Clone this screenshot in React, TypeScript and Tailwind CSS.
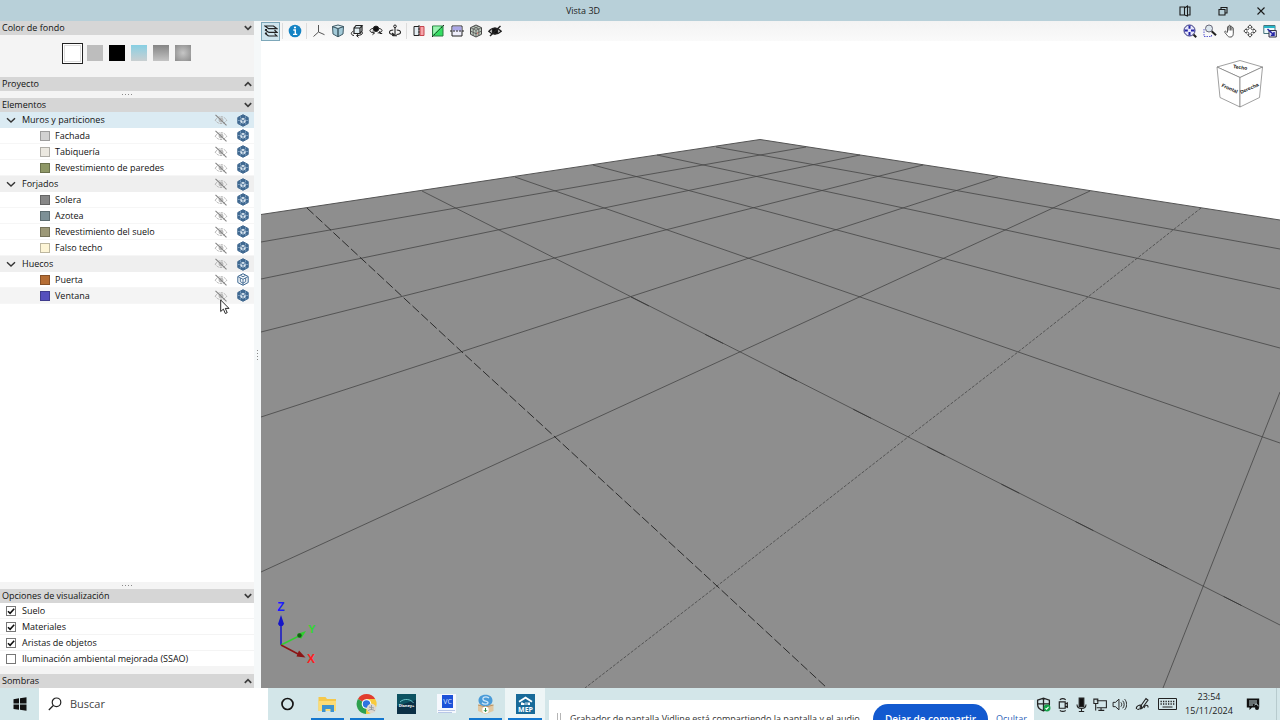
import * as React from "react";
import clsx from "clsx";

type Item = { name: string; color: string; wire?: boolean; hover?: boolean };
type Group = { name: string; active?: boolean; items: Item[] };

const groups: Group[] = [
  {
    name: "Muros y particiones",
    active: true,
    items: [
      { name: "Fachada", color: "bg-[#d2d2d2]" },
      { name: "Tabiquería", color: "bg-[#ebe8e0]" },
      { name: "Revestimiento de paredes", color: "bg-[#8f9867]" },
    ],
  },
  {
    name: "Forjados",
    items: [
      { name: "Solera", color: "bg-[#878787]" },
      { name: "Azotea", color: "bg-[#7d9096]" },
      { name: "Revestimiento del suelo", color: "bg-[#9c9877]" },
      { name: "Falso techo", color: "bg-[#fdf5d6]" },
    ],
  },
  {
    name: "Huecos",
    items: [
      { name: "Puerta", color: "bg-[#b56d34]", wire: true },
      { name: "Ventana", color: "bg-[#554fbd]", hover: true },
    ],
  },
];

const backgrounds = [
  { name: "Gris", style: "bg-[#bdbdbd]" },
  { name: "Negro", style: "bg-black" },
  { name: "Cielo", style: "bg-linear-to-b from-[#86cfe3] to-[#c9cfd1]" },
  { name: "Degradado", style: "bg-linear-to-b from-[#858585] to-[#c4c4c4]" },
  { name: "Radial", style: "bg-radial from-[#c6c6c6] to-[#8b8b8b]" },
];

// floor grid, [x1, y1, x2, y2]
const gridLines = [
  [806, 147, 261, 242],
  [860, 155, 261, 279],
  [923, 165, 261, 332],
  [998, 177, 261, 417],
  [1090, 191, 261, 572],
  [1280, 392, 1163, 688],
  [716, 147, 1280, 249],
  [657, 155, 1280, 289],
  [593, 165, 1280, 348],
  [515, 177, 1280, 443],
  [422, 191, 1280, 625],
];

function Chevron({ up = false }: { up?: boolean }) {
  return (
    <svg width="10" height="8" viewBox="0 0 10 8" fill="none" stroke="#3c3c3c" strokeWidth="1.7">
      <path d={up ? "M1.8 5.8 5 2.7l3.200 3.100" : "M1.8 2.2 5 5.300l3.200-3.100"} />
    </svg>
  );
}

function PanelHeader({ title, up }: { title: string; up?: boolean }) {
  return (
    <button
      type="button"
      className="flex h-[14px] w-full shrink-0 items-center justify-between bg-[#d6d6d6] pr-px pl-[2px] text-left"
    >
      <span>{title}</span>
      <Chevron up={up} />
    </button>
  );
}

function Splitter() {
  return (
    <div className="flex h-[7px] shrink-0 items-center justify-center gap-[2px] bg-[#f4f4f4]">
      {[0, 1, 2, 3].map((i) => (
        <i key={i} className="size-px bg-[#8a8a8a]" />
      ))}
    </div>
  );
}

function EyeOff() {
  return (
    <svg width="14" height="12" viewBox="0 0 14 12" fill="none" stroke="#b4b4b4">
      <path d="M1.2 6.2C3 3.6 5 2.7 7 2.7s4 .9 5.8 3.5C11 8.700 9 9.500 7 9.500S3 8.700 1.200 6.200Z" strokeWidth="1" strokeDasharray="2.500 .8" />
      <circle cx="7" cy="6" r="2" fill="#c4c4c4" />
      <path d="M1.500 .8 12.500 11.400" stroke="#858585" strokeWidth="1.100" />
    </svg>
  );
}

function Hexagon({ wire = false }: { wire?: boolean }) {
  return (
    <svg width="12" height="13" viewBox="0 0 12 13">
      <path d="M6 .7 11.200 3.500v6L6 12.300.8 9.500v-6Z" fill={wire ? "#f4f8fb" : "#3f6890"} stroke="#3f6890" strokeWidth="1" />
      {wire ? (
        <path d="M1 3.600 6 6.300l5-2.700M6 6.300v5.700M3.400 2.300 6 3.800l2.600-1.500M3.300 5v3.600L6 10.200l2.700-1.600V5" fill="none" stroke="#3f6890" strokeWidth=".9" />
      ) : (
        <>
          <path d="M3.400 2.400v2M8.600 2.400v2M1 6.500h1.800M9.200 6.500H11M3.200 10.400V9M8.800 10.400V9" stroke="#8fb0cf" strokeWidth=".8" />
          <path d="m6 3.700 2.700 1.500v3L6 9.700 3.300 8.200v-3Z" fill="#dbe7f1" />
          <path d="M3.300 5.200 6 6.600l2.700-1.400M6 6.600v3.100" fill="none" stroke="#3f6890" strokeWidth=".9" />
        </>
      )}
    </svg>
  );
}

function TreeActions({ name, wire }: { name: string; wire?: boolean }) {
  return (
    <span className="ml-auto flex items-center gap-[9px] pr-[5px]">
      <button type="button" aria-label={`Ocultar ${name}`}>
        <EyeOff />
      </button>
      <button type="button" aria-label={`Opacidad ${name}`}>
        <Hexagon wire={wire} />
      </button>
    </span>
  );
}

function Tree() {
  const [closed, setClosed] = React.useState<string[]>([]);
  const toggle = (name: string) =>
    setClosed((c) => (c.includes(name) ? c.filter((n) => n !== name) : [...c, name]));

  return (
    <ul className="min-h-0 flex-1 overflow-hidden bg-white">
      {groups.map((g) => (
        <li key={g.name}>
          <div className={clsx("flex h-4 items-center", g.active ? "bg-[#dbebf3]" : "bg-[#efefef]")}>
            <button type="button" onClick={() => toggle(g.name)} className="flex items-center gap-[6px] pl-[6px]">
              <svg width="10" height="8" viewBox="0 0 10 8" fill="none" stroke="#333" strokeWidth="1.4">
                <path d="M1 2.200 5 6l4-3.800" />
              </svg>
              {g.name}
            </button>
            <TreeActions name={g.name} />
          </div>
          {!closed.includes(g.name) && (
            <ul>
              {g.items.map((item) => (
                <li
                  key={item.name}
                  className={clsx(
                    "flex h-4 items-center border-b border-[#f6f6f6] pl-10",
                    item.hover && "bg-[#f4f4f4]"
                  )}
                >
                  <i className={clsx("mr-[5px] size-[10px] border border-black/25", item.color)} />
                  {item.name}
                  <TreeActions name={item.name} wire={item.wire} />
                </li>
              ))}
            </ul>
          )}
        </li>
      ))}
    </ul>
  );
}

function Option({ label, checked = false }: { label: string; checked?: boolean }) {
  return (
    <label className="flex h-4 items-center border-b border-[#f4f4f4] bg-white pl-[6px]">
      <span className="relative mr-[6px] size-[10px]">
        <input
          type="checkbox"
          defaultChecked={checked}
          className="peer block size-[10px] appearance-none border border-[#777] bg-white"
        />
        <svg
          className="pointer-events-none absolute inset-0 hidden peer-checked:block"
          width="10"
          height="10"
          viewBox="0 0 10 10"
          fill="none"
          stroke="#111"
          strokeWidth="1.6"
        >
          <path d="M2 5.200 4.100 7.300 8.200 2.700" />
        </svg>
      </span>
      {label}
    </label>
  );
}

function Sidebar() {
  return (
    <aside className="flex w-[254px] shrink-0 flex-col bg-[#f4f4f4] text-[9px] leading-[14px] text-[#111]">
      <PanelHeader title="Color de fondo" />
      <div className="flex h-[42px] shrink-0 items-center justify-center gap-[6px] pr-[2px] pb-[6px]">
        <button type="button" aria-label="Blanco" className="-mr-[2px] size-[21px] border border-[#222] bg-white p-px">
          <i className="block size-full border border-[#ddd]" />
        </button>
        {backgrounds.map((b) => (
          <button key={b.name} type="button" aria-label={b.name} className={clsx("size-4", b.style)} />
        ))}
      </div>
      <PanelHeader title="Proyecto" up />
      <Splitter />
      <PanelHeader title="Elementos" />
      <Tree />
      <Splitter />
      <PanelHeader title="Opciones de visualización" />
      <div className="shrink-0 pb-[7px]">
        <Option label="Suelo" checked />
        <Option label="Materiales" checked />
        <Option label="Aristas de objetos" checked />
        <Option label="Iluminación ambiental mejorada (SSAO)" />
      </div>
      <PanelHeader title="Sombras" up />
    </aside>
  );
}

function Tool({
  label,
  active,
  wide,
  children,
}: {
  label: string;
  active?: boolean;
  wide?: boolean;
  children: React.ReactNode;
}) {
  return (
    <button
      type="button"
      aria-label={label}
      className={clsx(
        "flex h-[19px] shrink-0 items-center justify-center",
        wide ? "w-5" : "w-[19px]",
        active && "border border-[#7da7b9] bg-[#cfe5ee]"
      )}
    >
      <svg width="14" height="14" viewBox="0 0 14 14" fill="none" stroke="#222" strokeWidth="1">
        {children}
      </svg>
    </button>
  );
}

const Sep = () => <i className="mx-[2px] h-4 w-px shrink-0 bg-[#dcdcdc]" />;

function Toolbar() {
  return (
    <div className="flex h-5 shrink-0 items-center bg-linear-to-b from-[#f3f3f3] to-[#fafafa]">
      <Tool label="Capas" active>
        <path d="M1 2h8.500l3.500 2.700H4.500ZM1 5.700h2M4.500 8.300H13L10.500 6M1 5.700l3.500 2.600M1 9.200h2M4.500 12H13l-2.500-2.400M1 9.200 4.500 12" strokeWidth="1.200" />
      </Tool>
      <Sep />
      <Tool label="Información">
        <circle cx="7" cy="7" r="6.300" fill="#1583c4" stroke="none" />
        <path d="M5.300 6h2v4M5 10.400h4.200" stroke="#fff" strokeWidth="1.400" />
        <circle cx="7" cy="3.500" r="1.100" fill="#fff" stroke="none" />
      </Tool>
      <Sep />
      <Tool label="Ejes">
        <path d="M6.500 1v7M6.500 8 1.500 12.500M6.500 8l6 2.700" stroke="#555" />
      </Tool>
      <Tool label="Vista 3D">
        <path d="M1.500 2.500 7 4.500v8.300L2 10ZM12.500 2.500 7 4.500v8.300l5-2.800Z" fill="#a3cad8" stroke="#3f5a66" />
        <path d="M1.500 2.500 7 1l5.500 1.500L7 4.500Z" fill="#d8edf3" stroke="#3f5a66" />
      </Tool>
      <Tool label="Orbitar">
        <path d="M4 4h6v5.500H4ZM4 4l2-2.500h6L10 4M12 1.500V7l-2 2.500" fill="#e2eef2" strokeWidth="1.200" />
        <path d="M3.500 7C.5 8.500.5 11 4 11.500M12 8c1.500 1.500-.5 3.300-5 3.600M8.500 9.700 6.500 11.600l2 1.800" />
      </Tool>
      <Tool label="Girar vista">
        <path d="M4 4.500C.3 5 0 7.500 3 8.500l2.300.5M10 4.500c3.700.5 4 3 1 4l-2.300.5M10.800 7v2.500h2.400M3.500 7.200l2 1.800-2 1.700" />
        <circle cx="7" cy="4.800" r="2.700" fill="#111" />
      </Tool>
      <Tool label="Girar eje">
        <path d="M7 3v8.500M5 11.700h4M5.300 6C.3 6.300.1 10.200 5.500 10.500M8.700 6c5 .3 5.200 4.200-.2 4.500M4.200 8.800l1.600 1.600-1.600 1.500" strokeWidth="1.100" />
        <circle cx="7" cy="2.300" r="1.300" fill="#fff" />
      </Tool>
      <Sep />
      <Tool label="Sección">
        <path d="M2 2.500h5v9H2Z" fill="#e4edf2" />
        <path d="M8 2.500h4v9H8Z" fill="#f6a4a9" stroke="#c4444d" />
        <path d="M7 1v12" stroke="#333" strokeDasharray="2 1" />
      </Tool>
      <Tool label="Recorte">
        <path d="M1.500 2h10.500v10H1.500Z" fill="#35dd63" stroke="#287a40" />
        <path d="M2.200 2.600h8L2.200 10.500Z" fill="#9df0b2" stroke="none" />
        <path d="M1 13 13 1" strokeDasharray="2 1" />
      </Tool>
      <Tool label="Plano horizontal">
        <path d="M2 2h10v10H2Z" fill="#eeeefb" />
        <path d="M2.500 2.500h9v4h-9Z" fill="#aaa7e7" stroke="none" />
        <path d="M0 7h14" strokeDasharray="2 1" />
      </Tool>
      <Tool label="Materiales">
        <path d="m7 1 5.500 2.700v6.600L7 13 1.500 10.300V3.700Z" fill="#bcc9bd" stroke="#444" />
        <path d="M1.500 3.700 7 6.300l5.500-2.600M7 6.300V13M4.200 2.300l5.600 2.700v6.600M9.800 2.300 4.200 5v6.600M1.500 7 7 9.700 12.500 7" stroke="#555" strokeWidth=".8" />
        <path d="M8 8.500 9.200 8v2L8 10.500Z" fill="#d28a7d" stroke="none" />
      </Tool>
      <Tool label="Ocultar">
        <path d="M.8 7.300C4 3 9.500 3 13.200 7.300 9.500 11 4 11 .8 7.300Z" strokeWidth="1.400" />
        <circle cx="7" cy="7" r="3" fill="#111" />
        <path d="M2 12 12.500 2" strokeWidth="1.400" />
      </Tool>

      <div className="ml-auto flex">
        <Tool label="Encuadrar" wide>
          <circle cx="6.500" cy="6.500" r="5.500" fill="#e7e7fa" stroke="#33337c" />
          <path d="M6.500 1.500v3.300M6.500 8v3.500M1.500 6.500h3.300M8 6.500h3.500" stroke="#2424a6" strokeWidth="2" />
          <path d="m10.500 10.500 2.700 2.800" strokeWidth="2" />
        </Tool>
        <Tool label="Zoom ventana" wide>
          <path d="M1 5v7.500h7.500V10" stroke="#5a5ad0" strokeDasharray="1.500 1" />
          <circle cx="6" cy="4.500" r="3.500" fill="#dbe6ee" stroke="#667" />
          <path d="m8.700 7.200 4.300 4" strokeWidth="2" />
        </Tool>
        <Tool label="Desplazar" wide>
          <path d="M4.500 8V3.200c0-1 1.400-1 1.400 0V2c0-1 1.500-1 1.500 0v1c0-1 1.500-1 1.500 0v1.200c0-.9 1.400-.9 1.400 0v5C10.300 11.500 9.500 13 8 13H6.500C5 13 4 11 1.800 8.300c-.6-.8.500-1.600 1.300-.8L4.500 9M5.900 3v3.500M7.400 3v3.500M8.900 4v2.500" fill="#fff" stroke="#444" strokeWidth=".9" />
        </Tool>
        <Tool label="Mover" wide>
          <path d="m7 .8 2.300 2.500H8v1.400L9.300 6h1.400V4.700L13.200 7l-2.500 2.300V8H9.300L8 9.300v1.400h1.300L7 13.200l-2.300-2.500H6V9.300L4.700 8H3.300v1.300L.8 7l2.500-2.300V6h1.400L6 4.700V3.300H4.700Z" fill="#fff" stroke="#333" strokeWidth=".9" />
        </Tool>
        <Tool label="Cambiar ventana" wide>
          <path d="M.8 1.500H12v8H.8Z" fill="#eef9fb" stroke="#45737c" />
          <path d="M1 2h11v2H1Z" fill="#26b4c6" stroke="none" />
          <path d="M6 6.500h7.300V13H6Z" fill="#e5e5fb" stroke="#334" />
          <path d="m4.500 5 6.500 6M11 8v3.200H7.800" stroke="#2525a5" strokeWidth="1.500" />
        </Tool>
      </div>
    </div>
  );
}

function Scene() {
  return (
    <svg className="min-h-0 w-full flex-1 bg-white" viewBox="261 41 1019 647" preserveAspectRatio="xMidYMid slice">
      <path d="M261 214.500 760 139.500 1280 220V688H261Z" fill="#8e8e8e" />
      <path d="M261 214.500 760 139.500 1280 220" fill="none" stroke="#555" />
      <g stroke="#454545" strokeWidth=".8">
        {gridLines.map(([x1, y1, x2, y2], i) => (
          <line key={i} x1={x1} y1={y1} x2={x2} y2={y2} />
        ))}
        <path d="M1201 208 1018 352 908 437 717 586 585 688" fill="none" strokeDasharray="3 1.500" />
        <path d="M307 208 462 352 555 437 717 586 827 688" fill="none" stroke="#2c2c2c" strokeDasharray="9 3" strokeWidth="1" />
        <path d="M631 297 740 352 908 437 1203 586 1280 625" fill="none" stroke="#333" strokeDasharray="20 63" />
      </g>

      <g fill="#fff" stroke="#777" strokeWidth=".7">
        <path d="M1217 67 1240 60.500 1262.500 67 1240 77.500Z" />
        <path d="M1217 67 1240 77.500V107L1220 97.500Z" />
        <path d="M1262.500 67 1240 77.500V107L1259.500 97.500Z" />
      </g>
      <g fontFamily="Liberation Sans" fontWeight="700" fontSize="5" textAnchor="middle" fill="#111">
        <text transform="translate(1240 69) rotate(8)">Techo</text>
        <text transform="translate(1229 90) rotate(24)">Frontal</text>
        <text transform="translate(1250 90) rotate(-24)">Derecha</text>
      </g>

      <g strokeWidth="1.500">
        <path d="M281 645v-24" stroke="#1515c8" />
        <path d="m278 624 3-9 3 9-1.500 2h-3Z" fill="#1515c8" />
        <path d="m281 645 20-10" stroke="#2fd02f" />
        <path d="m297 634 9-3-5 8Z" fill="#2fd02f" />
        <circle cx="299.500" cy="635.500" r="2.200" fill="#146014" />
        <path d="m281 645 18 9.500" stroke="#8c1414" />
        <path d="m299 650.500 6.500 7-9-1Z" fill="#8c1414" />
      </g>
      <g fontFamily="Liberation Sans" fontWeight="700" fontSize="12" textAnchor="middle">
        <text x="281" y="611" fill="#1c1cff">Z</text>
        <text x="312" y="633" fill="#2fd92f" fontSize="11">Y</text>
        <text x="311" y="663" fill="#ff1f1f">X</text>
      </g>
    </svg>
  );
}

function TitleBar() {
  return (
    <header className="flex h-[21px] shrink-0 items-center bg-[#b8d0d9] text-[9px] text-[#222]">
      <h1 className="flex-1 text-center">Vista 3D</h1>
      {[
        { label: "Acoplar", d: "M1 2h4.500v8H1ZM5.500 2v8M5.500 3l3-2v10l-3-1M8.500 2H11v8H8.500" },
        { label: "Restaurar", d: "M2 4.500h6V10H2ZM4 4.500v-2h6V8H8" },
        { label: "Cerrar", d: "m2.500 2.500 7 7M9.500 2.500l-7 7" },
      ].map((b) => (
        <button key={b.label} type="button" aria-label={b.label} className="flex h-full w-[38px] items-center justify-center">
          <svg width="12" height="12" viewBox="0 0 12 12" fill="none" stroke="#1a1a1a" strokeWidth="1.100">
            <path d={b.d} />
          </svg>
        </button>
      ))}
    </header>
  );
}

function TaskButton({
  label,
  open,
  active,
  children,
}: {
  label: string;
  open?: boolean;
  active?: boolean;
  children: React.ReactNode;
}) {
  return (
    <button
      type="button"
      aria-label={label}
      className={clsx("flex flex-col items-center justify-between px-[3px]", active && "bg-[#edf5f6]")}
    >
      <svg className="mt-[6px]" width="21" height="21" viewBox="0 0 21 21">
        {children}
      </svg>
      <i className={clsx("h-[2px] w-full", open && "bg-[#1377cf]")} />
    </button>
  );
}

function Taskbar() {
  return (
    <footer className="flex h-8 shrink-0 overflow-hidden bg-[#d3e6e9] text-[#1b1b1b]">
      <button type="button" aria-label="Inicio" className="flex w-[39px] shrink-0 items-center justify-center">
        <svg width="14" height="14" viewBox="0 0 14 14" fill="#111">
          <path d="M.5 2.200 6 1.300v5.200H.5ZM7 1.200 13.500.3v6.200H7ZM.5 7.500H6v5.200l-5.500-.8ZM7 7.500h6.500v6.200L7 12.800Z" />
        </svg>
      </button>
      <label className="flex w-[229px] shrink-0 items-center bg-white pl-[9px]">
        <svg width="14" height="14" viewBox="0 0 14 14" fill="none" stroke="#222" strokeWidth="1.200">
          <circle cx="8.500" cy="5.300" r="4.300" />
          <path d="M5.300 8.500.8 13" />
        </svg>
        <input
          type="search"
          aria-label="Buscar"
          placeholder="Buscar"
          className="ml-2 w-40 text-[11px] outline-none placeholder:text-[#444]"
        />
      </label>
      <nav className="grid w-[277px] shrink-0 grid-cols-7">
        <TaskButton label="Cortana">
          <circle cx="10.500" cy="10" r="5.500" fill="none" stroke="#151515" strokeWidth="1.700" />
        </TaskButton>
        <TaskButton label="Explorador" open>
          <path d="M1.500 3h7l1.500 2h9v12h-17.500Z" fill="#f5c84b" />
          <path d="M1.500 7h17.500v10h-17.500Z" fill="#fbdc77" />
          <path d="M5 11h12v7h-3.500v-3h-5v3H5Z" fill="#3d93cf" />
        </TaskButton>
        <TaskButton label="Chrome" open>
          <path d="M10.500 10 1.900 5A10 10 0 0 1 19.200 5Z" fill="#e23d2e" />
          <path d="M10.500 10 1.900 5A10 10 0 0 0 10 20L13 13Z" fill="#2da04e" />
          <path d="M10.500 10 10 20A10 10 0 0 0 19.200 5H10Z" fill="#f9cb3c" />
          <circle cx="10.500" cy="10" r="4.800" fill="#fff" />
          <circle cx="10.500" cy="10" r="3.700" fill="#2f74e0" />
          <circle cx="15.500" cy="14.500" r="4.700" fill="#dfd8cf" />
          <path d="M12 17c1-2 5-2 7 0M13 13l5 1M15.500 11v5" stroke="#8e98a0" strokeWidth=".9" fill="none" />
        </TaskButton>
        <TaskButton label="Disney+">
          <path d="M1 0h19v20H1Z" fill="#0b3046" />
          <path d="M1 0h19v6L1 12Z" fill="#0d5362" />
          <path d="M4 8C8 4 15 5 17.500 9" stroke="#7fdde0" fill="none" strokeWidth=".8" />
          <text x="10.500" y="13" fontSize="4" fontWeight="700" textAnchor="middle" fill="#fff">Disney+</text>
        </TaskButton>
        <TaskButton label="VC">
          <path d="M1 0h19v19H1Z" fill="#f6f8fd" />
          <path d="M6 1h11v13H6Z" fill="#1c52d8" />
          <text x="11.500" y="10" fontSize="7" textAnchor="middle" fill="#dbe6ff">VC</text>
          <path d="M2 16.500h17M2 18.500h14" stroke="#9db1dd" strokeWidth=".7" />
        </TaskButton>
        <TaskButton label="Instalador" open>
          <path d="M3 11 10.500 8l8 3v6l-8 3L3 17Z" fill="#e2c7a0" />
          <path d="M3 11l7.500 2 8-2" stroke="#b7946a" fill="none" />
          <path d="M10.500.8c4.500 0 7 2.300 7 5.700s-2.800 5.700-7 5.700-7-2.300-7-5.700 2.500-5.700 7-5.700Z" fill="#4a9bd8" />
          <path d="M14 4C11 1.800 6.500 3.300 8.300 6c1.200 1.600 5 .6 4.700 3-.5 1.600-4.300 1.500-6 -.3" stroke="#cfe7f8" strokeWidth="1.300" fill="none" />
          <circle cx="10.500" cy="16" r="3.200" fill="#fff" />
          <path d="M10.500 14v3.500M9 16.200l1.500 1.500 1.500-1.500" stroke="#248745" fill="none" />
        </TaskButton>
        <TaskButton label="CYPECAD MEP" open active>
          <path d="M1 0h19v20H1Z" fill="#186a99" />
          <path d="m3.500 7 7-4.500 7 4.500-1 1.500-6-3.700-6 3.700ZM6 8.500h9V11H6Z" fill="#fff" />
          <path d="M8 8.500h2V11M12 8.500V11" stroke="#186a99" fill="none" />
          <text x="10.500" y="17.800" fontSize="7" fontWeight="700" textAnchor="middle" fill="#fff">MEP</text>
        </TaskButton>
      </nav>

      {/* screen sharing notice, runs off the bottom edge */}
      <div className="relative min-w-0 flex-1">
        <div className="absolute inset-x-0 top-3 ml-1 flex h-[38px] items-center bg-white pr-[7px] pl-2 text-[9px] whitespace-nowrap">
          <i className="mr-[9px] h-3 w-1 shrink-0 border-x border-[#b5b5b5]" />
          <p className="flex-1 text-[#333]">
            Grabador de pantalla Vidline está compartiendo la pantalla y el audio.
          </p>
          <button type="button" className="mr-2 h-[30px] w-[115px] shrink-0 rounded-full bg-[#1259cf] text-[10px] font-semibold text-white">
            Dejar de compartir
          </button>
          <a href="#" className="shrink-0 text-[#2d62b8]">
            Ocultar
          </a>
        </div>
      </div>

      <div className="flex w-[246px] shrink-0 items-center">
        {[
          <g key="s">
            <path d="M1.500 3 7 1l5.500 2v4c0 3-2.500 5-5.500 6-3-1-5.500-3-5.500-6ZM7 1v12M1.500 6.500h11" strokeWidth="1.200" />
            <circle cx="10.300" cy="10.300" r="3.200" fill="#16a34a" stroke="none" />
            <path d="m8.900 10.300 1 1 1.800-2" stroke="#fff" />
          </g>,
          <path key="c" d="M4 4.500h5.500v6H4ZM9.500 6.500l2-1v4l-2-1M4.500 2.500c1.500-1 4-1 5.500 0M4.500 12.500c1.500 1 4 1 5.500 0" strokeWidth="1.100" />,
          <g key="m">
            <path d="M4.800 1h4.400v8H4.800Z" fill="#111" />
            <path d="M2.800 7c0 5 8.400 5 8.400 0M7 11v2.500M4.500 13.500h5" />
          </g>,
          <path key="d" d="M3.500 3.500h9v6.500h-9M7.500 10v2.500M5 12.500h5.500M.8 2h3.700v4H.8ZM2.500 6v6.500" />,
          <path key="v" d="M1 5h2.200L6.500 2v10L3.200 9H1ZM8.300 5c1 1 1 3 0 4M10 3.500c1.800 2 1.800 5 0 7M11.800 2c2.500 3 2.500 7 0 10" strokeWidth=".9" />,
        ].map((icon) => (
          <svg key={icon.key} className="mx-[2px] shrink-0" width="15" height="15" viewBox="0 0 14 14" fill="none" stroke="#222">
            {icon}
          </svg>
        ))}
        <svg className="ml-[6px] shrink-0" width="15" height="15" viewBox="0 0 15 15" fill="none" stroke="#222" strokeWidth="1.100">
          <path d="M1.500 12c-1-3 4-5 5-3s-3 4-4 3M5 10l6-8.500 2 1.500-6 8.500M9 11c1.500-4 4.500-3 4-.500M5 10l.5 1.800L7 11.500" />
        </svg>
        <svg className="ml-2 shrink-0" width="19" height="12" viewBox="0 0 19 12" fill="none" stroke="#222">
          <path d="M.5.500h18v11H.5Z" />
          <path d="M2.500 3.500h14M2.500 6h14" strokeDasharray="1.300 1.200" strokeWidth="1.300" />
          <path d="M4.500 9h10" />
        </svg>
        <time className="w-[64px] shrink-0 text-center text-[9px] leading-[14px]">
          23:54
          <br />
          15/11/2024
        </time>
        <svg className="ml-[5px] shrink-0" width="14" height="14" viewBox="0 0 14 14">
          <path d="M.8 1.500h12.400v9H6l-2.500 2.500v-2.500H.8Z" fill="#111" />
          <path d="M3 4h8M3 6h8M3 8h4" stroke="#d3e6e9" strokeWidth=".9" />
          <path d="M8.500 8c2-2 4.500 0 3 2.500" stroke="#d3e6e9" fill="none" />
          <circle cx="11" cy="11" r="2" fill="#111" />
        </svg>
        <i className="mr-[3px] ml-auto h-full w-px bg-[#b7cbce]" />
      </div>
    </footer>
  );
}

export default function App() {
  return (
    <div className="relative flex h-screen flex-col overflow-hidden bg-[#f5f8f9] font-['Open_Sans','Noto_Sans',sans-serif]">
      <TitleBar />
      <div className="flex min-h-0 flex-1">
        <Sidebar />
        <div className="flex w-[7px] shrink-0 flex-col items-center justify-center gap-[2px]">
          {[0, 1, 2, 3].map((i) => (
            <i key={i} className="size-px bg-[#8a8a8a]" />
          ))}
        </div>
        <main className="flex min-w-0 flex-1 flex-col">
          <Toolbar />
          <Scene />
        </main>
      </div>
      <Taskbar />
      <svg className="pointer-events-none absolute top-[299px] left-[220px]" width="10" height="16" viewBox="0 0 10 16">
        <path d="M.7 1v11.500l2.700-2.400 1.900 4.400 1.900-.8-1.900-4.300H9Z" fill="#fff" stroke="#111" strokeWidth=".9" />
      </svg>
    </div>
  );
}
